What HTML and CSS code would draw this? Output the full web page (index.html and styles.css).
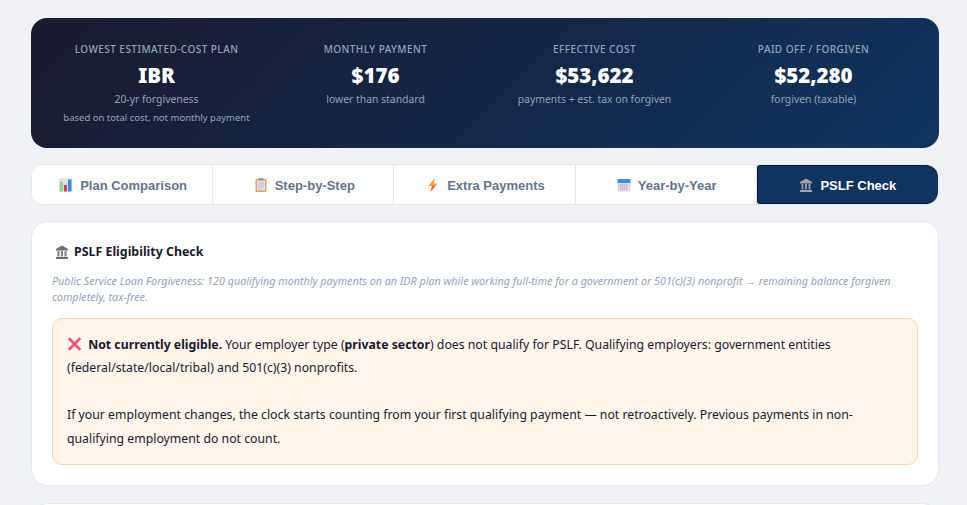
FILE: index.html
```html
<!DOCTYPE html>
<html lang="en">
<head>
<meta charset="utf-8">
<title>PSLF Check</title>
<link rel="stylesheet" href="styles.css">
</head>
<body>
<main class="page">
  <section class="hero">
    <div class="stat">
      <div class="stat-label">Lowest Estimated-Cost Plan</div>
      <div class="stat-value">IBR</div>
      <div class="stat-sub">20-yr forgiveness</div>
      <div class="stat-note">based on total cost, not monthly payment</div>
    </div>
    <div class="stat">
      <div class="stat-label">Monthly Payment</div>
      <div class="stat-value">$176</div>
      <div class="stat-sub">lower than standard</div>
    </div>
    <div class="stat">
      <div class="stat-label">Effective Cost</div>
      <div class="stat-value">$53,622</div>
      <div class="stat-sub">payments + est. tax on forgiven</div>
    </div>
    <div class="stat">
      <div class="stat-label">Paid Off / Forgiven</div>
      <div class="stat-value">$52,280</div>
      <div class="stat-sub">forgiven (taxable)</div>
    </div>
  </section>

  <nav class="tabs">
    <button class="tab">
      <svg class="ico" viewBox="0 0 14 14"><rect x="0" y="0.5" width="13" height="13" fill="#dedfe3"/><rect x="1" y="4" width="3" height="9.500" fill="#8ed88a"/><rect x="5" y="7" width="3" height="6.500" fill="#e0356f"/><rect x="9" y="1.500" width="3.500" height="12" fill="#3a8fdc"/></svg>
      Plan Comparison</button>
    <button class="tab">
      <svg class="ico" viewBox="0 0 14 14"><rect x="1.5" y="1" width="11" height="13" rx="1" fill="#dfa26c"/><rect x="3" y="2.500" width="8" height="10" fill="#e6e3ee"/><rect x="4.500" y="0" width="5" height="2.500" fill="#9a9aa8"/><path d="M4 5h6M4 7h6M4 9h6M4 11h4" stroke="#a9a9bb" stroke-width=".8"/></svg>
      Step-by-Step</button>
    <button class="tab">
      <svg class="ico" viewBox="0 0 14 14"><path d="M8.500 0 2.500 8h3.500L4.500 14 11.500 5.500H7.800Z" fill="#f9a03f"/><path d="M6 8 4.500 14 9.800 7.500Z" fill="#f0603a"/></svg>
      Extra Payments</button>
    <button class="tab">
      <svg class="ico" viewBox="0 0 14 14"><rect x="0.500" y="1" width="13" height="12.500" rx="1" fill="#ddd6ee"/><rect x="0.500" y="1" width="13" height="4" rx="1" fill="#3f8be8"/><path d="M3 7h8M3 9h8M3 11h8" stroke="#a59cc4" stroke-width="1" stroke-dasharray="1.200 .8"/></svg>
      Year-by-Year</button>
    <button class="tab tab-active">
      <svg class="ico" viewBox="0 0 14 14"><path d="M7 0.500 13 4v1.500H1V4Z" fill="#a7a2ac"/><path d="M2.500 6h2v5.500h-2ZM6 6h2v5.500H6ZM9.500 6h2v5.500h-2Z" fill="#9b96a2"/><rect x="1" y="12" width="12" height="2" fill="#a7a2ac"/></svg>
      PSLF Check</button>
  </nav>

  <section class="card">
    <h2 class="card-title">
      <svg class="ico ico-title" viewBox="0 0 14 14"><path d="M7 0.500 13 4v1.500H1V4Z" fill="#6f6a78"/><path d="M2.500 6h2v5.500h-2ZM6 6h2v5.500H6ZM9.500 6h2v5.500h-2Z" fill="#817c8a"/><rect x="1" y="12" width="12" height="2" fill="#6f6a78"/></svg>
      PSLF Eligibility Check</h2>
    <p class="card-intro">Public Service Loan Forgiveness: 120 qualifying monthly payments on an IDR plan while working full-time for a government or 501(c)(3) nonprofit → remaining balance forgiven completely, tax-free.</p>
    <div class="notice">
      <svg class="ico ico-x" viewBox="0 0 15 14"><path d="M1.800 1.300 13.200 12.700M13.200 1.300 1.800 12.700" stroke="#f4557a" stroke-width="2.800"/></svg>
      <strong>Not currently eligible.</strong> Your employer type (<strong>private sector</strong>) does not qualify for PSLF. Qualifying employers: government entities (federal/state/local/tribal) and 501(c)(3) nonprofits.<br><br>If your employment changes, the clock starts counting from your first qualifying payment — not retroactively. Previous payments in non-qualifying employment do not count.
    </div>
  </section>

  <section class="card card-next"></section>
</main>
</body>
</html>
```

FILE: styles.css
```css
* { box-sizing: border-box; }
html, body { height: 505px; overflow: hidden; }
body {
  margin: 0;
  background: #f0f2f5;
  font-family: "Noto Sans", "Open Sans", sans-serif;
  color: #1a1a2e;
}
.page { padding: 18px 28px 0 31px; display: flex; flex-direction: column; }
.hero {
  height: 130px;
  padding: 24px 28px;
  border-radius: 16px;
  background: linear-gradient(135deg, #1a1a2e, #0f3460);
  display: grid;
  grid-template-columns: repeat(4, 1fr);
  gap: 24px;
  text-align: center;
}
.stat-label {
  font-size: 10px;
  line-height: 14px;
  font-weight: 500;
  letter-spacing: .45px;
  text-transform: uppercase;
  color: #94a3b8;
}
.stat-value {
  margin-top: 6px;
  font-size: 20.500px;
  line-height: 26px;
  font-weight: 900;
  color: #fff;
}
.stat-sub { margin-top: 3px; font-size: 10.400px; line-height: 16px; color: #94a3b8; }
.stat-note { margin-top: 4px; font-size: 9.500px; line-height: 14px; color: #94a3b8; }
.tabs {
  margin-top: 16px;
  height: 41px;
  display: grid;
  grid-template-columns: repeat(5, 1fr);
  background: #fff;
  border: 1px solid #e2e8f0;
  border-radius: 12px;
  overflow: hidden;
}
.tab {
  border: 0;
  border-right: 1px solid #e2e8f0;
  background: #fff;
  color: #64748b;
  font-family: "Liberation Sans", Arial, sans-serif;
  font-size: 13px;
  font-weight: 700;
  padding: 1px 0 0 2px;
  display: flex;
  align-items: center;
  justify-content: center;
  gap: 7px;
}
.tab:last-child { border-right: 0; }
.tab-active {
  background: #0f3460;
  color: #fff;
  border: 1px solid #11182b;
  border-radius: 3px 12px 12px 3px;
  padding-left: 0;
}
.ico { width: 14px; height: 14px; flex: none; }
.card {
  margin-top: 16px;
  background: #fff;
  border: 1px solid #e2e8f0;
  border-radius: 16px;
  padding: 20px;
  height: 265px;
}
.card-title {
  margin: 1px 0 0;
  font-size: 12.400px;
  line-height: 17px;
  font-weight: 700;
  color: #1a1a2e;
  display: flex;
  align-items: center;
  gap: 5px;
}
.ico-title { margin-left: 3px; }
.card-intro {
  margin: 13px 0 0;
  font-size: 10.750px;
  line-height: 16px;
  font-style: italic;
  color: #94a3b8;
}
.notice {
  margin-top: 13px;
  padding: 14px;
  background: #fff5eb;
  border: 1px solid #fed7aa;
  border-radius: 10px;
  font-size: 12.270px;
  line-height: 23.400px;
  color: #1a1a2e;
}
.ico-x { width: 15px; vertical-align: -2px; margin-right: 3px; }
.card-next { margin-top: 17px; padding: 0; }
```
